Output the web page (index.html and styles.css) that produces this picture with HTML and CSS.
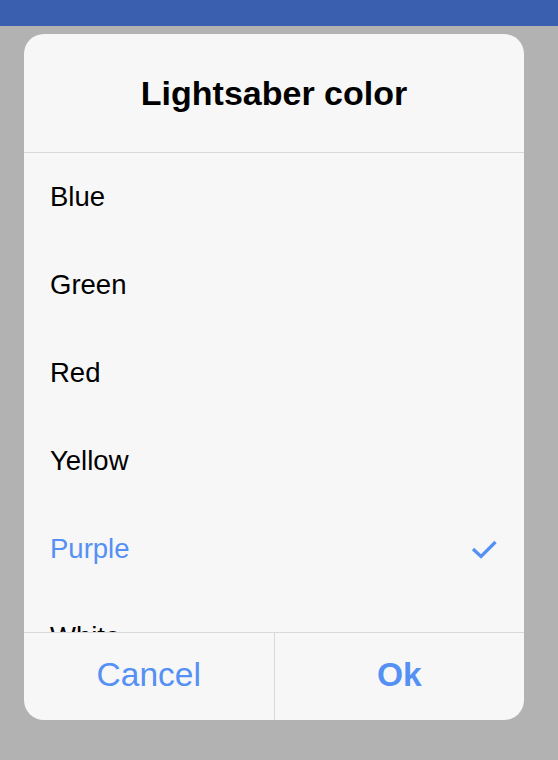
FILE: index.html
```html
<!DOCTYPE html>
<html lang="en">
<head>
<meta charset="utf-8">
<title>Lightsaber color</title>
<link rel="stylesheet" href="styles.css">
</head>
<body>
<div class="topbar"></div>
<div class="dialog">
  <div class="dialog-header">Lightsaber color</div>
  <ul class="options">
    <li class="option">Blue</li>
    <li class="option">Green</li>
    <li class="option">Red</li>
    <li class="option">Yellow</li>
    <li class="option option-selected">
      <span>Purple</span>
      <svg class="check" width="26" height="20" viewBox="0 0 26 20"><path d="M2 10 L10 17.5 L24.5 3" fill="none" stroke="currentColor" stroke-width="3.2" stroke-linecap="butt" stroke-linejoin="miter"/></svg>
    </li>
    <li class="option">White</li>
  </ul>
  <div class="dialog-footer">
    <button class="btn btn-cancel">Cancel</button>
    <button class="btn btn-primary">Ok</button>
  </div>
</div>
</body>
</html>
```
FILE: styles.css
```css
html, body {
  margin: 0;
  padding: 0;
}
body {
  background: #b2b2b2;
  font-family: "Liberation Sans", Arial, Helvetica, sans-serif;
  width: 558px;
  height: 760px;
  overflow: hidden;
}
.topbar {
  height: 26px;
  background: #3a5fae;
}
.dialog {
  margin: 8px 0 0 24px;
  width: 500px;
  height: 686px;
  background: #f7f7f7;
  border-radius: 20px;
  overflow: hidden;
  display: flex;
  flex-direction: column;
}
.dialog-header {
  height: 118px;
  line-height: 118px;
  text-align: center;
  font-size: 34px;
  font-weight: bold;
  color: #000;
  border-bottom: 1px solid #d9d9d9;
  flex: none;
}
.options {
  list-style: none;
  margin: 0;
  padding: 0;
  height: 479px;
  overflow: hidden;
  flex: none;
}
.option {
  height: 88px;
  line-height: 88px;
  font-size: 27.5px;
  color: #000;
  padding: 0 27px 0 26px;
  display: flex;
  align-items: center;
  justify-content: space-between;
}
.option-selected {
  color: #5590f5;
}
.check {
  display: block;
  color: #5590f5;
}
.dialog-footer {
  border-top: 1px solid #d9d9d9;
  height: 87px;
  display: flex;
  flex: none;
}
.btn {
  flex: 1;
  box-sizing: border-box;
  border: 0;
  background: transparent;
  margin: 0;
  padding: 0 0 4px;
  font-family: "Liberation Sans", Arial, Helvetica, sans-serif;
  font-size: 33.5px;
  line-height: 83px;
  color: #5590f5;
}
.btn-cancel {
  border-right: 1px solid #d9d9d9;
}
.btn-primary {
  font-weight: bold;
}
```
